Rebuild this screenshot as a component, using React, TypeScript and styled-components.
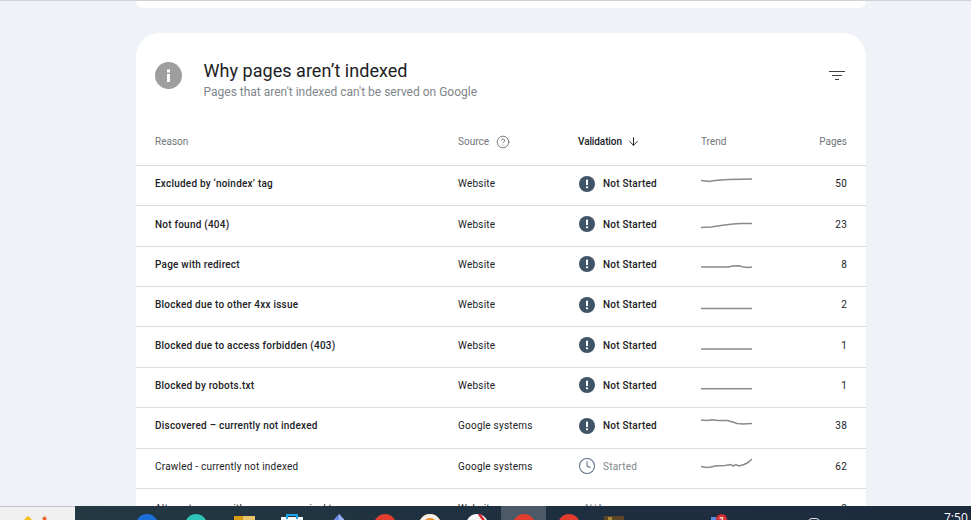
import styled, { createGlobalStyle } from 'styled-components';
import { ArrowDown, CircleHelp, Clock } from 'lucide-react';

type rowType = {
  reason: string;
  source: string;
  status: 'notStarted' | 'started' | 'none';
  trend: string;
  pages: number;
};

const rows: rowType[] = [
  { reason: "Excluded by ‘noindex’ tag", source: 'Website', status: 'notStarted', trend: '0,7.5 5,8 8,8.5 14,7.5 27,6.5 51,6', pages: 50 },
  { reason: 'Not found (404)', source: 'Website', status: 'notStarted', trend: '0,14.5 10,14 20,12.5 32,11 40,10.5 51,10.5', pages: 23 },
  { reason: 'Page with redirect', source: 'Website', status: 'notStarted', trend: '0,14 28,14 31,13 38,12.8 42,14 47,14.5 51,14', pages: 8 },
  { reason: 'Blocked due to other 4xx issue', source: 'Website', status: 'notStarted', trend: '0,14.5 51,14.5', pages: 2 },
  { reason: 'Blocked due to access forbidden (403)', source: 'Website', status: 'notStarted', trend: '0,15 51,15', pages: 1 },
  { reason: 'Blocked by robots.txt', source: 'Website', status: 'notStarted', trend: '0,14.8 51,14.8', pages: 1 },
  { reason: 'Discovered – currently not indexed', source: 'Google systems', status: 'notStarted', trend: '0,5 6,5.5 11,4.8 17,5.5 26,5.5 32,7 36,8.5 42,9 51,8.5', pages: 38 },
  { reason: 'Crawled - currently not indexed', source: 'Google systems', status: 'started', trend: '0,11.5 5,12.5 10,12 14,11 24,10.5 30,9.5 32,11 35,9.5 38,11 43,9.5 47,7.5 51,4', pages: 62 },
  { reason: 'Alternate page with proper canonical tag', source: 'Website', status: 'none', trend: '0,12 51,12', pages: 8 },
];

const slots = [
  { w: 47, kind: 'ticks' },
  { w: 50, kind: 'edge' },
  { w: 48, kind: 'teal' },
  { w: 47, kind: 'folder' },
  { w: 49, kind: 'store' },
  { w: 46, kind: 'diamond' },
  { w: 45, kind: 'red' },
  { w: 46, kind: 'orange' },
  { w: 48, kind: 'white' },
  { w: 45, kind: 'red', active: true },
  { w: 46, kind: 'red' },
  { w: 43, kind: 'brown' },
];

const SlotIcon = ({ kind }: { kind: string }) => {
  if (kind === 'ticks') {
    return (
      <svg width='24' height='14' viewBox='0 0 24 14'>
        <path d='M5 6h1.5v9H5zM11 6h1.5v9H11zM16 6h1.5v9H16z' fill='#fff' />
      </svg>
    );
  }
  if (kind === 'folder') {
    return (
      <svg width='24' height='14' viewBox='0 0 24 14'>
        <rect x='2' y='2' width='21' height='12' fill='#e8c46a' />
        <rect x='2' y='2' width='9' height='12' fill='#d99a14' />
      </svg>
    );
  }
  if (kind === 'store') {
    return (
      <svg width='24' height='14' viewBox='0 0 24 14'>
        <rect x='1' y='3' width='22' height='11' fill='#f4f6f8' />
        <path d='M7 5V1h10v4' fill='none' stroke='#1aa5e8' strokeWidth='2' />
      </svg>
    );
  }
  if (kind === 'diamond') {
    return (
      <svg width='24' height='14' viewBox='0 0 24 14'>
        <path d='M12 0l10 11H2z' fill='#6f8ee8' />
        <path d='M12 0l10 11H12z' fill='#9db4f2' />
      </svg>
    );
  }
  if (kind === 'brown') {
    return (
      <svg width='24' height='14' viewBox='0 0 24 14'>
        <rect x='2' y='2' width='20' height='12' fill='#5e4526' />
        <rect x='6' y='3' width='4' height='3' fill='#a88a3a' />
      </svg>
    );
  }
  const colors: { [key: string]: string } = {
    edge: '#1a6fd8',
    teal: '#2fc4b8',
    red: '#e23d2e',
    orange: '#f08a24',
    white: '#f7f7f7',
  };
  return (
    <svg width='24' height='14' viewBox='0 0 24 14'>
      <circle cx='12' cy='11' r='11' fill={colors[kind]} />
      {kind === 'orange' && <circle cx='12' cy='11' r='9' fill='none' stroke='#f6f1ea' strokeWidth='4' />}
      {kind === 'white' && <path d='M14 0l6 8' stroke='#d8232a' strokeWidth='2.5' />}
    </svg>
  );
};

const AlertIcon = () => (
  <svg width='16' height='16' viewBox='0 0 16 16'>
    <circle cx='8' cy='8' r='8' fill='#3f5466' />
    <rect x='7' y='3.6' width='2' height='5.4' rx='0.6' fill='#fff' />
    <rect x='7' y='10.3' width='2' height='2' rx='0.6' fill='#fff' />
  </svg>
);

const StatusIcon = ({ status }: { status: rowType['status'] }) => {
  if (status === 'notStarted') return <AlertIcon />;
  if (status === 'started') return <Clock size={18} strokeWidth={1.4} color='#5c7088' />;
  return null;
};

const statusText = { notStarted: 'Not Started', started: 'Started', none: 'N/A' };

const App = () => {
  return (
    <Screen>
      <GlobalStyle />
      <Main>
        <TopCard />
        <Card>
          <CardHeader>
            <InfoBadge>
              <svg width='27' height='27' viewBox='0 0 27 27'>
                <rect x='12' y='12' width='3' height='8' fill='#fff' />
                <rect x='12' y='7.5' width='3' height='3' fill='#fff' />
              </svg>
            </InfoBadge>
            <Titles>
              <Title>Why pages aren’t indexed</Title>
              <SubTitle>Pages that aren't indexed can't be served on Google</SubTitle>
            </Titles>
            <FilterIcon width='16' height='10' viewBox='0 0 16 10'>
              <path d='M0 .5h16M3 4.5h10M6 8.5h4' stroke='#3c4043' strokeWidth='1' fill='none' />
            </FilterIcon>
          </CardHeader>
          <HeadRow>
            <HeadCell>Reason</HeadCell>
            <HeadCell>
              Source
              <CircleHelp size={14} strokeWidth={1.4} color='#5f6368' />
            </HeadCell>
            <ValidationHead $active>
              Validation
              <ArrowDown size={13} strokeWidth={1.8} color='#202124' />
            </ValidationHead>
            <HeadCell>Trend</HeadCell>
            <HeadCell $right>Pages</HeadCell>
          </HeadRow>
          {rows.map((row) => (
            <Row key={row.reason}>
              <ReasonCell $plain={row.status !== 'notStarted'}>{row.reason}</ReasonCell>
              <Cell>{row.source}</Cell>
              <StatusCell $status={row.status}>
                <StatusIcon status={row.status} />
                {statusText[row.status]}
              </StatusCell>
              <TrendCell>
                <svg width='51' height='24' viewBox='0 -1 51 24'>
                  <polyline points={row.trend} fill='none' stroke='#8a8a8a' strokeWidth='1.5' />
                </svg>
              </TrendCell>
              <PagesCell>{row.pages}</PagesCell>
            </Row>
          ))}
        </Card>
      </Main>
      <Taskbar>
        <TaskbarStart>
          <svg width='60' height='13' viewBox='0 0 60 13'>
            <path d='M28 7c3 2 4.500 4 4.500 7h-9c0-3 1.500-5 4.500-7z' fill='#f6c320' />
            <circle cx='44.5' cy='9.500' r='2' fill='#f0692a' />
          </svg>
        </TaskbarStart>
        <Slots>
          {slots.map((slot, index) => (
            <Slot key={index} $w={slot.w} $active={slot.active}>
              <SlotIcon kind={slot.kind} />
            </Slot>
          ))}
        </Slots>
        <Tray>
          <TrayChat />
          <TrayBadge>2</TrayBadge>
          <TrayDot />
          <Clocks>7:50 PM</Clocks>
        </Tray>
      </Taskbar>
    </Screen>
  );
};

export default App;

const GlobalStyle = createGlobalStyle`
  html, body {
    margin: 0;
    padding: 0;
    overflow: hidden;
    background-color: #eff3f8;
    font-family: Roboto, "Liberation Sans", sans-serif;
  }
`;

const Screen = styled.div`
  width: 971px;
  height: 520px;
  display: flex;
  flex-direction: column;
  overflow: hidden;
`;

const Main = styled.div`
  height: 506px;
  flex-shrink: 0;
  overflow: hidden;
  border-top: 1px solid #cfd3d7;
  box-sizing: border-box;
  padding-left: 136px;
`;

const TopCard = styled.div`
  width: 730px;
  height: 7px;
  background-color: #fff;
  border-radius: 0 0 20px 20px;
  margin-bottom: 25px;
`;

const Card = styled.div`
  width: 730px;
  background-color: #fff;
  border-radius: 24px 24px 0 0;
  height: 600px;
`;

const CardHeader = styled.div`
  display: flex;
  align-items: flex-start;
  padding: 29px 21px 0 19px;
  height: 58px;
`;

const InfoBadge = styled.div`
  width: 27px;
  height: 27px;
  border-radius: 50%;
  background-color: #9e9e9e;
  flex-shrink: 0;
  margin-right: 22px;
`;

const Titles = styled.div`
  flex: 1;
  margin-top: -3.5px;
  margin-left: -0.5px;
`;

const Title = styled.div`
  font-size: 18px;
  line-height: 24px;
  letter-spacing: 0.04px;
  color: #202124;
`;

const SubTitle = styled.div`
  font-size: 12px;
  line-height: 18px;
  color: #80868b;
`;

const FilterIcon = styled.svg`
  margin-top: 9px;
`;

const HeadRow = styled.div`
  display: grid;
  grid-template-columns: 303px 120px 123px 1fr 1fr;
  align-items: center;
  height: 46px;
  box-sizing: border-box;
  padding: 0 19px 2px 19px;
  border-bottom: 1px solid #dadce0;
`;

const HeadCell = styled.div<{ $active?: boolean; $right?: boolean }>`
  display: flex;
  align-items: center;
  gap: 7px;
  font-size: 10px;
  font-weight: ${({ $active }) => ($active ? 500 : 400)};
  color: ${({ $active }) => ($active ? '#202124' : '#70757a')};
  justify-content: ${({ $right }) => ($right ? 'flex-end' : 'flex-start')};
`;

const ValidationHead = styled(HeadCell)`
  gap: 5px;
  letter-spacing: -0.1px;
`;

const Row = styled.div`
  display: grid;
  grid-template-columns: 303px 120px 123px 1fr 1fr;
  align-items: center;
  height: 40.37px;
  box-sizing: border-box;
  padding: 0 19px 4px 19px;
  border-bottom: 1px solid #dadce0;
  &:last-child {
    padding-bottom: 0;
  }
`;

const Cell = styled.div`
  font-size: 10px;
  letter-spacing: 0.22px;
  color: #202124;
`;

const ReasonCell = styled(Cell)<{ $plain?: boolean }>`
  font-weight: ${({ $plain }) => ($plain ? 400 : 500)};
`;

const StatusCell = styled(Cell)<{ $status: rowType['status'] }>`
  display: flex;
  align-items: center;
  gap: ${({ $status }) => ($status === 'started' ? '7px' : '8px')};
  margin-left: ${({ $status }) => ($status === 'none' ? '7px' : $status === 'started' ? '0' : '1px')};
  font-weight: ${({ $status }) => ($status === 'notStarted' ? 500 : 400)};
  color: ${({ $status }) => ($status === 'notStarted' ? '#202124' : '#80868b')};
`;

const TrendCell = styled.div`
  display: flex;
  height: 24px;
`;

const PagesCell = styled(Cell)`
  text-align: right;
`;

const Taskbar = styled.div`
  height: 14px;
  flex-shrink: 0;
  display: flex;
  overflow: hidden;
  background: linear-gradient(90deg, #243a42 0%, #1f3040 50%, #1c2a3e 100%);
`;

const TaskbarStart = styled.div`
  width: 75px;
  box-sizing: border-box;
  background-color: #f0f0f0;
  border-top: 1px solid #bfc3c7;
  flex-shrink: 0;
`;

const Slots = styled.div`
  display: flex;
`;

const Slot = styled.div<{ $w: number; $active?: boolean }>`
  width: ${({ $w }) => $w}px;
  height: 20px;
  padding-top: 8px;
  box-sizing: border-box;
  display: flex;
  justify-content: center;
  background-color: ${({ $active }) => ($active ? '#4b5a66' : 'transparent')};
`;

const Tray = styled.div`
  flex: 1;
  position: relative;
  overflow: hidden;
`;

const TrayChat = styled.span`
  position: absolute;
  left: 76px;
  top: 11px;
  width: 8px;
  height: 8px;
  background-color: #5b8ae0;
`;

const TrayBadge = styled.span`
  position: absolute;
  left: 81px;
  top: 8px;
  width: 11px;
  height: 11px;
  border-radius: 50%;
  background-color: #d32f2f;
  color: #fff;
  font-size: 8px;
  font-weight: 700;
  line-height: 11px;
  text-align: center;
`;

const TrayDot = styled.span`
  position: absolute;
  left: 173px;
  top: 12px;
  width: 10px;
  height: 4px;
  border: 1px solid #e8e8e8;
  border-radius: 4px 4px 0 0;
`;

const Clocks = styled.span`
  position: absolute;
  left: 309px;
  top: 5px;
  font-family: "Open Sans", sans-serif;
  font-size: 12px;
  line-height: 14px;
  white-space: nowrap;
  color: #fff;
`;
